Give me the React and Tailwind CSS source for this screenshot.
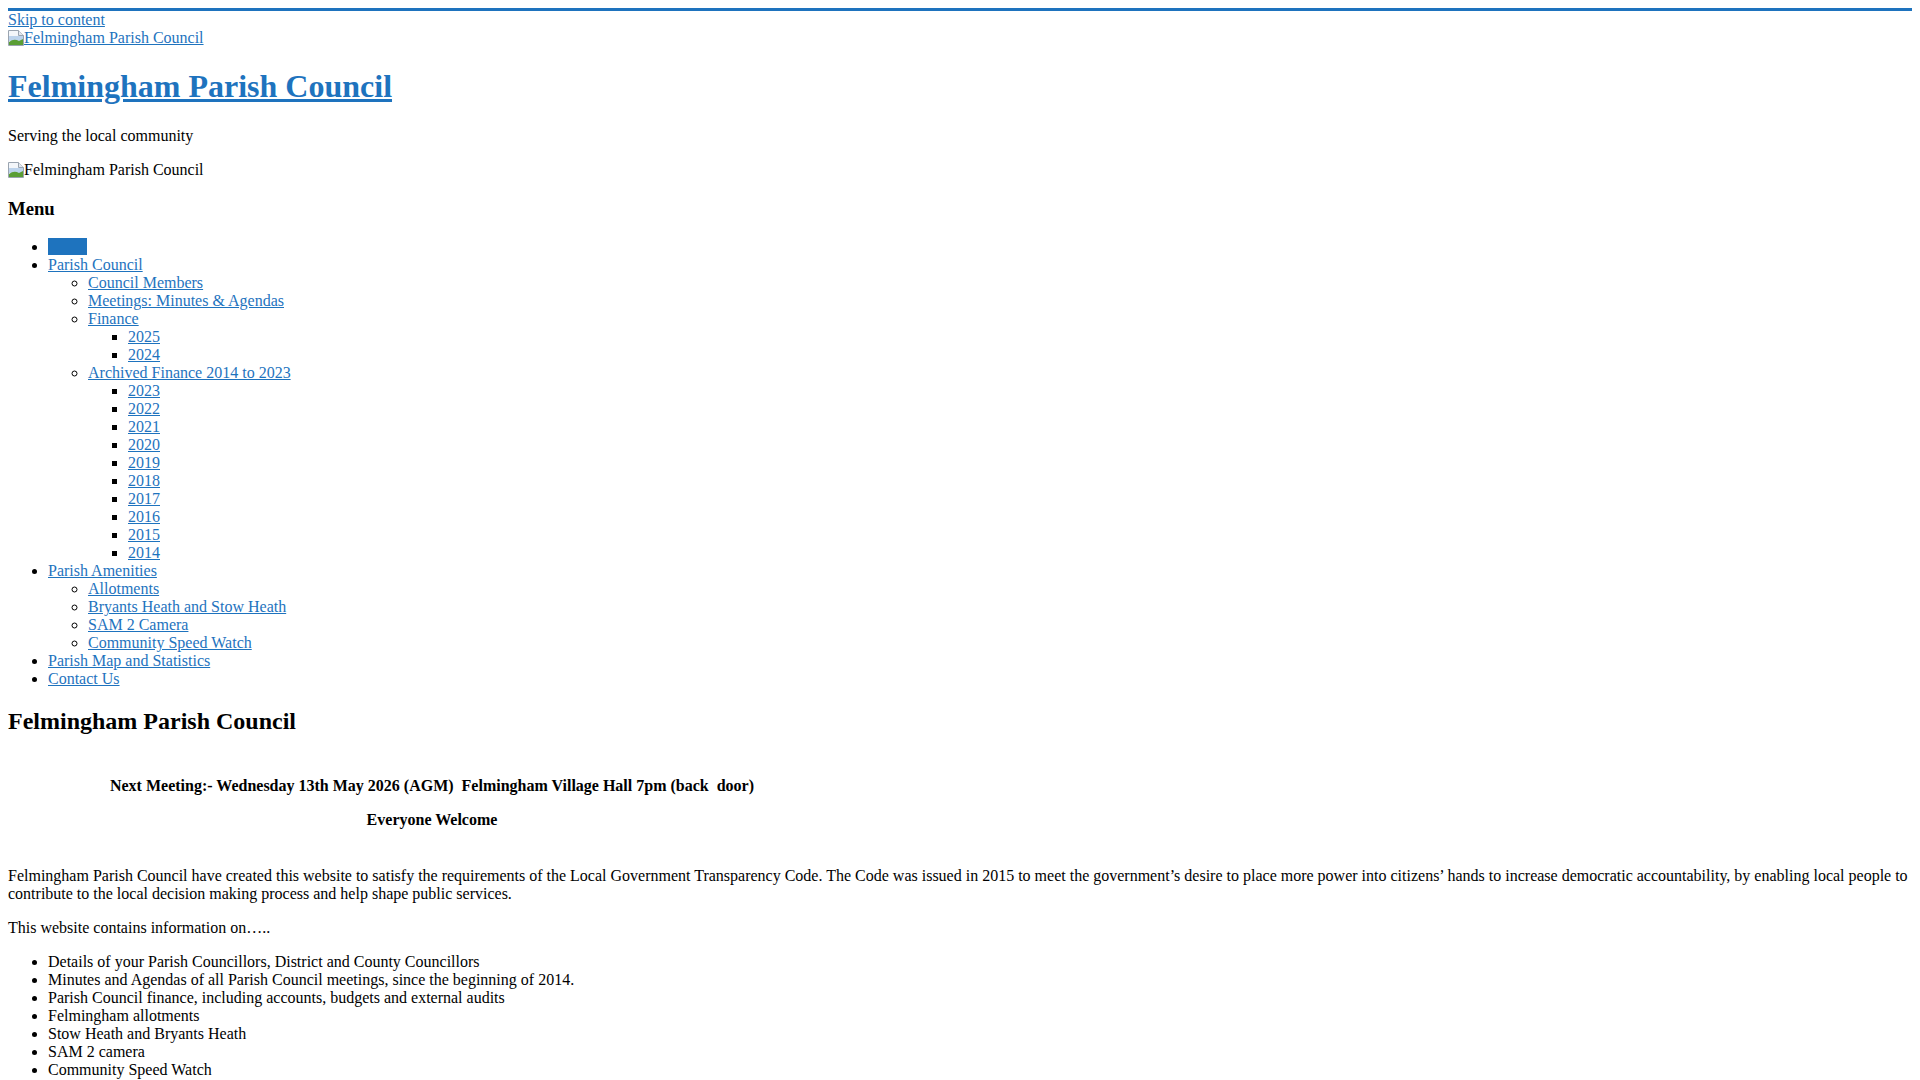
import React from 'react';

const BrokenImage = () => (
  <svg width="16" height="16" viewBox="0 0 16 16" className="inline-block align-text-bottom">
    <path d="M0.5 0.5 H10.5 L15.5 5.5 V15.5 H0.5 Z" fill="#f3f6fa" stroke="#9aa4b0" />
    <path d="M10.5 0.5 V5.5 H15.5" fill="#e2e8ef" stroke="#9aa4b0" />
    <rect x="1" y="6" width="14" height="5" fill="#bcd3ec" />
    <path d="M1 15 L1 12 Q6 8 11 11 L15 9 L15 15 Z" fill="#5a9e35" />
  </svg>
);

const menu = [
  { label: '', box: true },
  {
    label: 'Parish Council',
    children: [
      { label: 'Council Members' },
      { label: 'Meetings: Minutes & Agendas' },
      { label: 'Finance', children: ['2025', '2024'] },
      {
        label: 'Archived Finance 2014 to 2023',
        children: ['2023', '2022', '2021', '2020', '2019', '2018', '2017', '2016', '2015', '2014'],
      },
    ],
  },
  {
    label: 'Parish Amenities',
    children: [
      { label: 'Allotments' },
      { label: 'Bryants Heath and Stow Heath' },
      { label: 'SAM 2 Camera' },
      { label: 'Community Speed Watch' },
    ],
  },
  { label: 'Parish Map and Statistics' },
  { label: 'Contact Us' },
];

const info = [
  'Details of your Parish Councillors, District and County Councillors',
  'Minutes and Agendas of all Parish Council meetings, since the beginning of 2014.',
  'Parish Council finance, including accounts, budgets and external audits',
  'Felmingham allotments',
  'Stow Heath and Bryants Heath',
  'SAM 2 camera',
  'Community Speed Watch',
];

const link = 'text-[#1e73be] underline';

export default function App() {
  return (
    <div className="m-2 bg-white font-['Liberation_Serif',serif] text-[16px] leading-[normal] text-black">
      <div className="border-t-[3px] border-[#1e73be]">
        <a href="#" className={link}>Skip to content</a>
        <div>
          <a href="#" className={link}>
            <BrokenImage />Felmingham Parish Council
          </a>
        </div>
        <h1 className="my-[21.44px] text-[32px] font-bold">
          <a href="#" className={link}>Felmingham Parish Council</a>
        </h1>
        <p className="my-4">Serving the local community</p>
        <div>
          <BrokenImage />Felmingham Parish Council
        </div>
        <h3 className="my-[18.72px] text-[18.72px] font-bold">Menu</h3>
        <ul className="my-4 list-disc pl-10">
          {menu.map((item, i) => (
            <li key={i}>
              {item.box ? (
                <a href="#" className="inline-block h-[17px] w-[39px] bg-[#1e73be] align-[-3px]" />
              ) : (
                <a href="#" className={link}>{item.label}</a>
              )}
              {item.children && (
                <ul className="list-[circle] pl-10">
                  {item.children.map((sub) => (
                    <li key={sub.label}>
                      <a href="#" className={link}>{sub.label}</a>
                      {sub.children && (
                        <ul className="list-[square] pl-10">
                          {sub.children.map((y) => (
                            <li key={y}>
                              <a href="#" className={link}>{y}</a>
                            </li>
                          ))}
                        </ul>
                      )}
                    </li>
                  ))}
                </ul>
              )}
            </li>
          ))}
        </ul>
        <h2 className="mt-[19.92px] mb-[42px] text-[24px] font-bold">Felmingham Parish Council</h2>
        <div className="w-[848px] text-center font-bold">
          <p className="my-4">
            Next Meeting:- Wednesday 13th May 2026 (AGM)&nbsp; Felmingham Village Hall 7pm (back&nbsp; door)
          </p>
          <p className="my-4">Everyone Welcome</p>
        </div>
        <p className="mt-[38px] mb-4">
          Felmingham Parish Council have created this website to satisfy the requirements of the Local Government
          Transparency Code. The Code was issued in 2015 to meet the government’s desire to place more power into
          citizens’ hands to increase democratic accountability, by enabling local people to contribute to the local
          decision making process and help shape public services.
        </p>
        <p className="my-4">This website contains information on…..</p>
        <ul className="my-4 list-disc pl-10">
          {info.map((t) => (
            <li key={t}>{t}</li>
          ))}
        </ul>
      </div>
    </div>
  );
}
